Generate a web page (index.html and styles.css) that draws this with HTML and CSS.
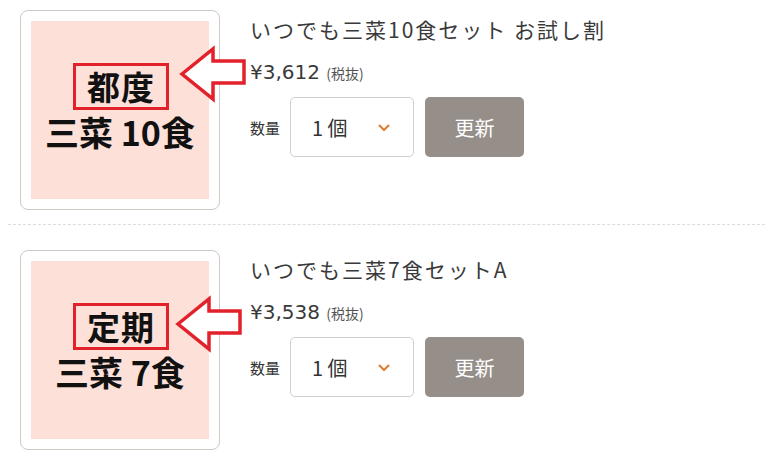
FILE: index.html
```html
<!DOCTYPE html>
<html lang="ja">
<head>
  <meta charset="UTF-8">
  <title>カート</title>
  <link rel="stylesheet" href="styles.css">
</head>
<body>

  <div class="cart">

    <div class="item">
      <div class="thumb">
        <div class="thumb-inner">
          <span class="tag">都度</span>
          <span class="menu">三菜 10食</span>
        </div>
      </div>
      <!-- 矢印 -->
      <svg class="arrow" width="70" height="58" viewBox="0 0 70 58">
        <polygon points="4,29 35,4 35,16 66,16 66,38 35,38 35,54" fill="#fff" stroke="#e3212b" stroke-width="3.5" stroke-linejoin="miter"/>
      </svg>
      <div class="info">
        <p class="name">いつでも三菜10食セット お試し割</p>
        <p class="price">¥3,612 <small>(税抜)</small></p>
        <div class="qty">
          <span class="qty-label">数量</span>
          <div class="select">
            <span>1 個</span>
            <svg width="14" height="9" viewBox="0 0 14 9"><path d="M2 2 L7 7 L12 2" fill="none" stroke="#e07a2c" stroke-width="2"/></svg>
          </div>
          <button class="update">更新</button>
        </div>
      </div>
    </div>

    <div class="item">
      <div class="thumb">
        <div class="thumb-inner">
          <span class="tag">定期</span>
          <span class="menu">三菜 7食</span>
        </div>
      </div>
      <svg class="arrow arrow-b" width="70" height="58" viewBox="0 0 70 58">
        <polygon points="4,29 35,4 35,16 66,16 66,38 35,38 35,54" fill="#fff" stroke="#e3212b" stroke-width="3.5" stroke-linejoin="miter"/>
      </svg>
      <div class="info">
        <p class="name">いつでも三菜7食セットA</p>
        <p class="price">¥3,538 <small>(税抜)</small></p>
        <div class="qty">
          <span class="qty-label">数量</span>
          <div class="select">
            <span>1 個</span>
            <svg width="14" height="9" viewBox="0 0 14 9"><path d="M2 2 L7 7 L12 2" fill="none" stroke="#e07a2c" stroke-width="2"/></svg>
          </div>
          <button class="update">更新</button>
        </div>
      </div>
    </div>

  </div>

</body>
</html>
```

FILE: styles.css
```css
body {
  margin: 0;
  padding: 0;
  background: #fff;
  font-family: "Noto Sans CJK JP", "Noto Sans", sans-serif;
  color: #333;
}

.cart {
  padding-left: 8px;
}

.item {
  position: relative;
  display: flex;
  padding: 25px 0 14px 12px;
  border-bottom: 1px dashed #dcdcdc;
}

.item:first-child {
  padding-top: 10px;
}

.thumb {
  width: 178px;
  height: 178px;
  padding: 10px;
  border: 1px solid #cfcac4;
  border-radius: 8px;
  flex-shrink: 0;
}

.thumb-inner {
  width: 100%;
  height: 100%;
  background: #fde0d8;
  display: flex;
  flex-direction: column;
  align-items: center;
  justify-content: center;
  color: #111;
  font-weight: bold;
}

.tag {
  font-size: 33px;
  line-height: 39px;
  padding: 1px 11px 1px;
  border: 3px solid #e3212b;
  margin-top: -4px;
  margin-left: 2px;
  letter-spacing: 1px;
}

.menu {
  font-size: 34px;
  line-height: 42px;
  margin-top: 1px;
}

.arrow {
  position: absolute;
  left: 170px;
  top: 45px;
}

.arrow-b {
  left: 166px;
  top: 70px;
}

.info {
  margin-left: 30px;
}

.name {
  margin: 4px 0 0;
  font-size: 21px;
  line-height: 30px;
  letter-spacing: 2px;
  color: #3a3a3a;
}

.price {
  margin: 15px 0 0;
  font-family: "DejaVu Sans", "Noto Sans CJK JP", sans-serif;
  font-size: 20px;
  line-height: 26px;
  color: #3a3a3a;
}

.price small {
  font-family: "Noto Sans CJK JP", sans-serif;
  font-size: 14px;
  color: #555;
}

.qty {
  display: flex;
  align-items: center;
  margin-top: 11px;
}

.qty-label {
  font-size: 15px;
  width: 40px;
}

.select {
  width: 124px;
  height: 60px;
  border: 1px solid #cfcfcf;
  border-radius: 5px;
  display: flex;
  align-items: center;
  justify-content: space-between;
  padding: 0 22px 0 21px;
  box-sizing: border-box;
  font-size: 20px;
  color: #333;
}

.update {
  margin-left: 11px;
  width: 99px;
  height: 60px;
  background: #968e88;
  color: #fff;
  border: none;
  border-radius: 5px;
  font-family: inherit;
  font-size: 20px;
}
```
